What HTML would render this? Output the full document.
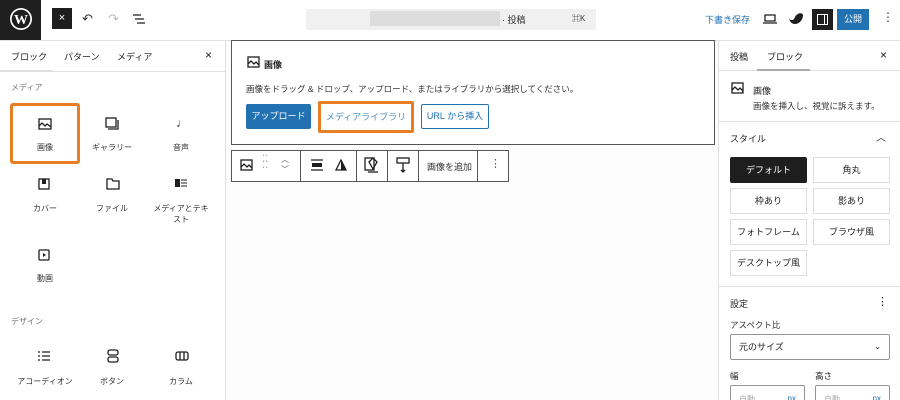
<!DOCTYPE html>
<html style="width:900px;height:400px;overflow:hidden"><head><meta charset="utf-8"><style>
*{box-sizing:border-box;margin:0;padding:0}
body{width:900px;height:400px;overflow:hidden;background:#fff;font-family:"Liberation Sans","Noto Sans CJK JP",sans-serif;color:#1e1e1e;position:relative;font-size:9px}
.a{position:absolute}
.ic{stroke:#1e1e1e;fill:none;stroke-width:1.3}
.btn{position:absolute;border:1px solid #ddd;background:#fff;text-align:center;font-size:9px;line-height:24px;color:#1e1e1e}
.lbl{position:absolute;width:70px;text-align:center;font-size:8px;color:#333}
</style></head><body>
<div class="a" style="left:0;top:0;width:41px;height:40px;background:#1e1e1e"></div>
<svg class="a" style="left:9px;top:7px" width="24" height="24" viewBox="0 0 24 24"><circle cx="12" cy="12" r="11" fill="#fff"/><circle cx="12" cy="12" r="9.3" fill="#1e1e1e"/><text x="12" y="17" font-size="14" font-weight="bold" text-anchor="middle" fill="#fff" font-family="Liberation Serif">W</text></svg>
<div class="a" style="left:52px;top:8px;width:20px;height:21px;background:#1e1e1e;color:#fff;font-size:11px;text-align:center;line-height:21px">×</div>
<div class="a" style="left:82px;top:11px;font-size:13px;color:#333">↶</div>
<div class="a" style="left:108px;top:11px;font-size:13px;color:#bbb">↷</div>
<svg class="a" style="left:132px;top:13px" width="14" height="12"><path d="M1 2h8M3 6h9M5 10h8" stroke="#1e1e1e" stroke-width="1.3"/></svg>
<div class="a" style="left:306px;top:9px;width:290px;height:21px;background:#f0f0f0;border-radius:2px"></div>
<div class="a" style="left:370px;top:11px;width:130px;height:15px;background:#ddd"></div>
<div class="a" style="left:502px;top:13px;font-size:9px;color:#333">· 投稿</div>
<div class="a" style="left:572px;top:13px;font-size:8px;color:#333">⌘K</div>
<div class="a" style="left:705px;top:13px;font-size:9px;color:#2271b1">下書き保存</div>
<svg class="a" style="left:763px;top:13px" width="14" height="12"><path d="M2 2h10v6H2zM0 10h14" stroke="#1e1e1e" stroke-width="1.3" fill="none"/></svg>
<svg class="a" style="left:788px;top:11px" width="16" height="16"><path d="M1 8c3 2 5 1 6-2 2-4 7-5 8-2 0 5-4 9-8 9-3 0-5-2-6-5z" fill="#1e1e1e"/></svg>
<div class="a" style="left:812px;top:9px;width:21px;height:21px;background:#1e1e1e"></div>
<div class="a" style="left:817px;top:14px;width:11px;height:11px;border:1.3px solid #fff"></div>
<div class="a" style="left:824px;top:14px;width:1.3px;height:11px;background:#fff"></div>
<div class="a" style="left:837px;top:9px;width:32px;height:21px;background:#2271b1;color:#fff;font-size:9px;text-align:center;line-height:21px">公開</div>
<div class="a" style="left:882px;top:10px;font-size:12px;color:#333">⋮</div>
<div class="a" style="left:0;top:40px;width:900px;height:1px;background:#e0e0e0"></div>
<div class="a" style="left:225px;top:41px;width:1px;height:359px;background:#e0e0e0"></div>
<div class="a" style="left:11px;top:50px;font-size:9px">ブロック</div>
<div class="a" style="left:64px;top:50px;font-size:9px">パターン</div>
<div class="a" style="left:117px;top:50px;font-size:9px">メディア</div>
<div class="a" style="left:205px;top:48px;font-size:12px">×</div>
<div class="a" style="left:0;top:71px;width:225px;height:1px;background:#e0e0e0"></div>
<div class="a" style="left:0;top:70px;width:53px;height:2px;background:#e0e0e0"></div>
<div class="a" style="left:11px;top:82px;font-size:8px;color:#777">メディア</div>
<div class="a" style="left:10px;top:103px;width:70px;height:61px;border:3px solid #e87e24;border-radius:3px"></div>
<svg class="a" style="left:38px;top:118px" width="14" height="12"><rect x="1" y="1" width="12" height="10" class="ic"/><path d="M1 8l3-3 3 3 2-2 4 3" class="ic"/></svg>
<div class="lbl" style="left:10px;top:142px">画像</div>
<svg class="a" style="left:105px;top:117px" width="14" height="14"><rect x="1" y="1" width="10" height="9" class="ic"/><path d="M3 12h10V3" class="ic"/></svg>
<div class="lbl" style="left:77px;top:142px">ギャラリー</div>
<div class="a" style="left:176px;top:116px;font-size:12px">♩</div>
<div class="lbl" style="left:146px;top:142px">音声</div>
<svg class="a" style="left:38px;top:178px" width="12" height="12"><rect x="1" y="1" width="10" height="10" class="ic"/><rect x="4" y="1" width="4" height="5" fill="#1e1e1e"/></svg>
<div class="lbl" style="left:10px;top:203px">カバー</div>
<svg class="a" style="left:106px;top:178px" width="14" height="12"><path d="M1 1h5l1 2h6v8H1z" class="ic"/></svg>
<div class="lbl" style="left:77px;top:203px">ファイル</div>
<div class="a" style="left:175px;top:179px;width:5px;height:8px;background:#1e1e1e"></div>
<svg class="a" style="left:181px;top:179px" width="6" height="8"><path d="M0 1h6M0 4h6M0 7h6" stroke="#1e1e1e"/></svg>
<div class="lbl" style="left:146px;top:203px;line-height:11px">メディアとテキ<br>スト</div>
<svg class="a" style="left:38px;top:249px" width="12" height="12"><rect x="1" y="1" width="10" height="10" rx="1" class="ic"/><path d="M5 4l3 2-3 2z" fill="#1e1e1e"/></svg>
<div class="lbl" style="left:10px;top:273px">動画</div>
<div class="a" style="left:11px;top:316px;font-size:8px;color:#777">デザイン</div>
<svg class="a" style="left:38px;top:351px" width="12" height="10"><path d="M0 1h2M4 1h8M0 5h2M4 5h8M0 9h2M4 9h8" stroke="#1e1e1e" stroke-width="1.2"/></svg>
<div class="lbl" style="left:10px;top:376px">アコーディオン</div>
<svg class="a" style="left:107px;top:349px" width="12" height="14"><rect x="1" y="1" width="10" height="5" rx="2" class="ic"/><rect x="1" y="8" width="10" height="5" rx="2" class="ic"/></svg>
<div class="lbl" style="left:77px;top:376px">ボタン</div>
<svg class="a" style="left:175px;top:351px" width="14" height="10"><rect x="1" y="1" width="12" height="8" rx="2" class="ic"/><path d="M5 1v8M9 1v8" class="ic"/></svg>
<div class="lbl" style="left:146px;top:376px">カラム</div>
<div class="a" style="left:226px;top:41px;width:492px;height:359px;background:#fcfcfc"></div>
<div class="a" style="left:231px;top:40px;width:484px;height:105px;border:1px solid #555;background:#fff"></div>
<svg class="a" style="left:247px;top:56px" width="13" height="12"><rect x="1" y="1" width="11" height="10" class="ic"/><path d="M1 8l3-3 3 3 2-2 3 3" class="ic"/></svg>
<div class="a" style="left:264px;top:58px;font-size:9px;font-weight:bold">画像</div>
<div class="a" style="left:246px;top:83px;font-size:8.5px;color:#333">画像をドラッグ &amp; ドロップ、アップロード、またはライブラリから選択してください。</div>
<div class="a" style="left:246px;top:104px;width:65px;height:25px;background:#2271b1;color:#fff;font-size:9px;text-align:center;line-height:25px;border-radius:2px">アップロード</div>
<div class="a" style="left:318px;top:101px;width:96px;height:32px;border:3px solid #e87e24;border-radius:2px;background:#fff"></div>
<div class="a" style="left:322px;top:105px;width:88px;height:24px;color:#2271b1;font-size:9px;text-align:center;line-height:24px;opacity:.8">メディアライブラリ</div>
<div class="a" style="left:421px;top:104px;width:68px;height:25px;border:1px solid #2271b1;color:#2271b1;font-size:9px;text-align:center;line-height:23px;border-radius:2px">URL から挿入</div>
<div class="a" style="left:231px;top:150px;width:278px;height:32px;border:1px solid #555;background:#fff"></div>
<div class="a" style="left:300px;top:151px;width:1px;height:30px;background:#555"></div>
<div class="a" style="left:356px;top:151px;width:1px;height:30px;background:#555"></div>
<div class="a" style="left:387px;top:151px;width:1px;height:30px;background:#555"></div>
<div class="a" style="left:418px;top:151px;width:1px;height:30px;background:#555"></div>
<div class="a" style="left:477px;top:151px;width:1px;height:30px;background:#555"></div>
<svg class="a" style="left:240px;top:159px" width="13" height="12"><rect x="1" y="1" width="11" height="10" class="ic"/><path d="M1 8l3-3 3 3 2-2 3 3" class="ic"/></svg>
<div class="a" style="left:262px;top:157px;font-size:10px;color:#999;line-height:6px">⁚⁚<br>⁚⁚</div>
<div class="a" style="left:281px;top:155px;font-size:8px;color:#555;line-height:10px">︿<br>﹀</div>
<svg class="a" style="left:311px;top:159px" width="12" height="12"><path d="M0 1h12M0 11h12" stroke="#1e1e1e" stroke-width="1.3"/><rect x="1" y="4" width="10" height="4" fill="#1e1e1e"/></svg>
<svg class="a" style="left:335px;top:159px" width="12" height="12"><path d="M6 1L1 11h10z" fill="none" stroke="#1e1e1e" stroke-width="1.3"/><path d="M6 1v10h5z" fill="#1e1e1e"/></svg>
<svg class="a" style="left:364px;top:157px" width="16" height="16"><rect x="1" y="1" width="9" height="12" class="ic"/><path d="M5 5l4-4 4 4-4 7z" class="ic"/><path d="M4 15h10" class="ic"/></svg>
<svg class="a" style="left:396px;top:157px" width="14" height="16"><rect x="1" y="1" width="12" height="5" class="ic"/><path d="M7 6v9M5 13l2 2 2-2" class="ic"/></svg>
<div class="a" style="left:427px;top:160px;font-size:9px;color:#333">画像を追加</div>
<div class="a" style="left:490px;top:157px;font-size:11px;color:#555">⋮</div>
<div class="a" style="left:718px;top:41px;width:1px;height:359px;background:#e0e0e0"></div>
<div class="a" style="left:730px;top:50px;font-size:9px">投稿</div>
<div class="a" style="left:767px;top:50px;font-size:9px">ブロック</div>
<div class="a" style="left:880px;top:48px;font-size:12px">×</div>
<div class="a" style="left:719px;top:70px;width:181px;height:1px;background:#e0e0e0"></div>
<div class="a" style="left:757px;top:69px;width:53px;height:2px;background:#aaa"></div>
<svg class="a" style="left:731px;top:82px" width="13" height="12"><rect x="1" y="1" width="11" height="10" class="ic"/><path d="M1 8l3-3 3 3 2-2 3 3" class="ic"/></svg>
<div class="a" style="left:753px;top:84px;font-size:9px">画像</div>
<div class="a" style="left:753px;top:100px;font-size:8.5px;color:#333">画像を挿入し、視覚に訴えます。</div>
<div class="a" style="left:719px;top:121px;width:181px;height:1px;background:#e0e0e0"></div>
<div class="a" style="left:730px;top:132px;font-size:9px">スタイル</div>
<div class="a" style="left:876px;top:129px;font-size:10px">︿</div>
<div class="a" style="left:730px;top:157px;width:77px;height:26px;background:#1e1e1e;color:#fff;font-size:9px;text-align:center;line-height:26px;border-radius:2px">デフォルト</div>
<div class="btn" style="left:813px;top:157px;width:77px;height:26px">角丸</div>
<div class="btn" style="left:730px;top:188px;width:77px;height:26px">枠あり</div>
<div class="btn" style="left:813px;top:188px;width:77px;height:26px">影あり</div>
<div class="btn" style="left:730px;top:219px;width:77px;height:26px">フォトフレーム</div>
<div class="btn" style="left:813px;top:219px;width:77px;height:26px">ブラウザ風</div>
<div class="btn" style="left:730px;top:250px;width:77px;height:26px">デスクトップ風</div>
<div class="a" style="left:719px;top:286px;width:181px;height:1px;background:#e0e0e0"></div>
<div class="a" style="left:730px;top:297px;font-size:9px">設定</div>
<div class="a" style="left:877px;top:295px;font-size:11px">⋮</div>
<div class="a" style="left:730px;top:319px;font-size:8.5px;color:#333">アスペクト比</div>
<div class="a" style="left:730px;top:334px;width:160px;height:26px;border:1px solid #949494;border-radius:2px;font-size:9px;line-height:24px;padding-left:8px">元のサイズ<span style="position:absolute;right:8px;font-size:8px">⌄</span></div>
<div class="a" style="left:730px;top:370px;font-size:8.5px">幅</div>
<div class="a" style="left:815px;top:370px;font-size:8.5px">高さ</div>
<div class="a" style="left:730px;top:385px;width:75px;height:15px;overflow:hidden;border:1px solid #949494;border-bottom:none;border-radius:2px 2px 0 0;font-size:8px;color:#aaa;padding:8px 0 0 8px">自動<span style="position:absolute;right:8px;color:#2271b1">px</span></div>
<div class="a" style="left:815px;top:385px;width:75px;height:15px;overflow:hidden;border:1px solid #949494;border-bottom:none;border-radius:2px 2px 0 0;font-size:8px;color:#aaa;padding:8px 0 0 8px">自動<span style="position:absolute;right:8px;color:#2271b1">px</span></div>
</body></html>
